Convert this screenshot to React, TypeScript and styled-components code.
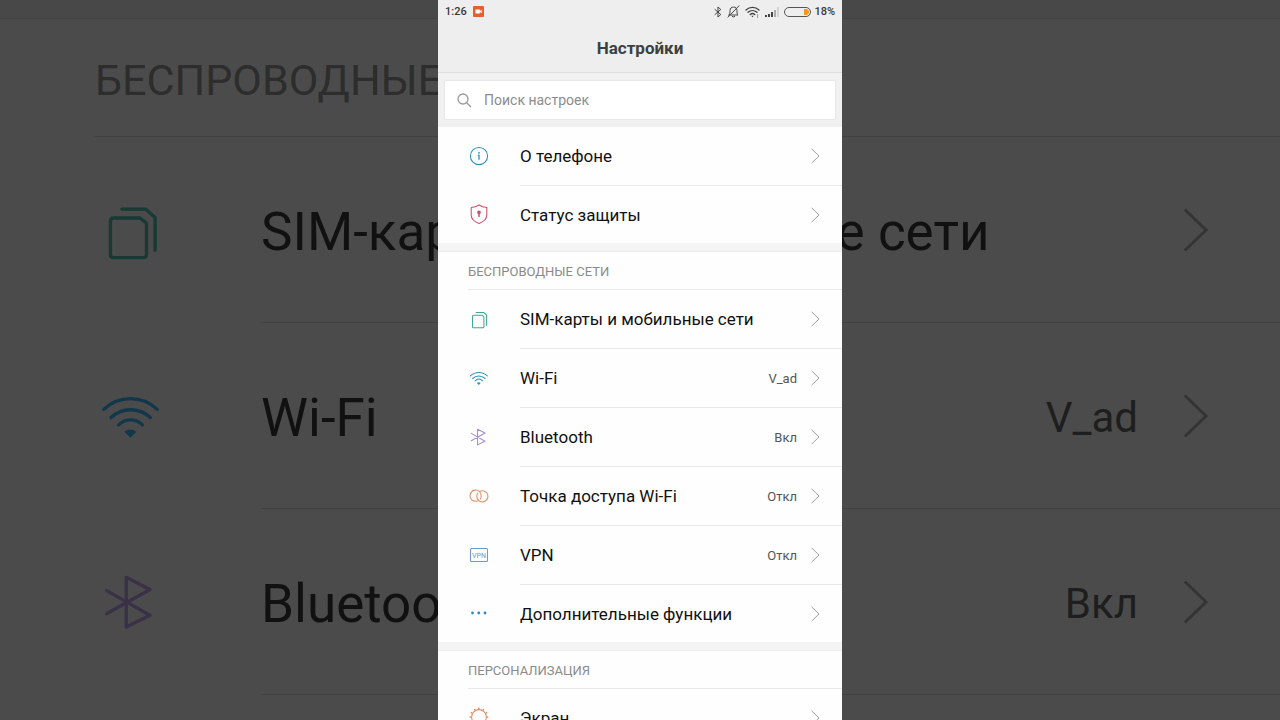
import React from "react";
import styled, { createGlobalStyle, ThemeProvider } from "styled-components";

const GlobalStyle = createGlobalStyle`
  *, *::before, *::after { box-sizing: border-box; }
  body { margin: 0; background: #4b4b4b; }
  button, input { font: inherit; }
`;

const screenTheme = {
  surface: "#fefefe",
  band: "#f4f4f4",
  bandEdge: "#ececec",
  bandSize: 9,
  line: "#e9e9e9",
  title: "#111111",
  value: "#555555",
  muted: "#8a8a8a",
  chevron: "#a0a0a0",
  headerHeight: 38,
  headerIndent: 30,
  headerDrop: 1,
  headerFont: 13,
  rowHeight: 59,
  lastRowHeight: 57,
  bodyIndent: 82,
  iconIndent: 29,
  iconSize: 24,
  iconLift: 2,
  titleDrop: 0,
  titleFont: 17,
  valueFont: 13,
  chevronWidth: 9,
  chevronHeight: 16,
  chevronGap: 14,
  endPadding: 22,
  blue: "#2b8fbb",
  green: "#3fa892",
  purple: "#a58bd6",
  orange: "#dd8f68",
  red: "#cf4d6b",
  steel: "#6a9ac6",
};

type Palette = typeof screenTheme;

const backdropTheme: Palette = {
  ...screenTheme,
  surface: "#4b4b4b",
  band: "#484848",
  bandEdge: "#434343",
  bandSize: 19,
  line: "#414141",
  title: "#111111",
  value: "#1e1e1e",
  muted: "#2d2d2d",
  chevron: "#343434",
  headerHeight: 118,
  headerIndent: 95,
  headerDrop: 4,
  headerFont: 43,
  rowHeight: 186,
  lastRowHeight: 186,
  bodyIndent: 261,
  iconIndent: 93,
  iconSize: 76,
  iconLift: 0,
  titleDrop: 4,
  titleFont: 53,
  valueFont: 42,
  chevronWidth: 26,
  chevronHeight: 46,
  chevronGap: 45,
  endPadding: 71,
  blue: "#11384a",
  green: "#173a34",
  purple: "#3a3048",
};

const Stage = styled.div`
  display: grid;
  grid-template: minmax(0, 1fr) / minmax(0, 1fr);
  height: 100vh;
  overflow: hidden;
  font-family: Roboto, "Liberation Sans", sans-serif;
`;

const Backdrop = styled.div`
  grid-area: 1 / 1;
  overflow: hidden;
  background: #4b4b4b;
`;

const Screen = styled.main`
  grid-area: 1 / 1;
  justify-self: center;
  position: relative;
  width: 100%;
  max-width: 404px;
  overflow: hidden;
  background: #fefefe;
`;

const StatusBar = styled.div`
  display: flex;
  align-items: center;
  justify-content: space-between;
  height: 23px;
  padding: 0 7px;
  background: #eeeeee;
  color: #3a3a3a;
  font-size: 11px;
  font-weight: 500;
  line-height: 23px;
`;

const StatusGroup = styled.div`
  display: flex;
  align-items: center;
  gap: 6px;
`;

const StatusIconGroup = styled(StatusGroup)`
  gap: 5px;
`;

const Battery = styled.span`
  display: flex;
  justify-content: flex-end;
  width: 27px;
  height: 10px;
  padding: 1px;
  border: 1px solid #555555;
  border-radius: 5px;
`;

const Charge = styled.span`
  width: 5px;
  border-radius: 0 3px 3px 0;
  background: #f59a1c;
`;

const BatteryGroup = styled(StatusGroup)`
  gap: 3px;
`;

const TitleBar = styled.header`
  display: flex;
  align-items: center;
  justify-content: center;
  height: 50px;
  border-bottom: 1px solid #dfdfdf;
  background: #eeeeee;
`;

const Title = styled.h1`
  margin: 0;
  color: #3f3f3f;
  font-size: 17px;
  font-weight: 700;
  line-height: 24px;
`;

const SearchArea = styled.form`
  padding: 7px 6px;
  background: #f1f1f1;
`;

const SearchBox = styled.label`
  display: flex;
  align-items: center;
  gap: 12px;
  height: 40px;
  padding: 0 12px;
  border: 1px solid #e8e8e8;
  border-radius: 2px;
  background: #ffffff;
`;

const SearchInput = styled.input`
  flex: 1;
  min-width: 0;
  padding: 0;
  border: 0;
  outline: 0;
  background: none;
  color: #333333;
  font-size: 14px;
  line-height: 20px;
  &::placeholder { color: #8c8c8c; opacity: 1; }
`;

const Band = styled.div`
  height: ${(p: any) => p.theme.bandSize}px;
  border-bottom: 1px solid ${(p: any) => p.theme.bandEdge};
  background: ${(p: any) => p.theme.band};
`;

const SectionTitle = styled.h2`
  display: flex;
  align-items: center;
  height: ${(p: any) => p.theme.headerHeight}px;
  margin: 0 0 0 ${(p: any) => p.theme.headerIndent}px;
  padding-top: ${(p: any) => p.theme.headerDrop}px;
  border-bottom: 1px solid ${(p: any) => p.theme.line};
  color: ${(p: any) => p.theme.muted};
  font-size: ${(p: any) => p.theme.headerFont}px;
  font-weight: 400;
  white-space: nowrap;
`;

const List = styled.ul`
  margin: 0;
  padding: 0;
  list-style: none;
  background: ${(p: any) => p.theme.surface};
`;

const RowButton = styled.button`
  display: flex;
  align-items: stretch;
  width: 100%;
  height: ${(p: any) => p.theme.rowHeight}px;
  padding: 0;
  border: 0;
  background: none;
  text-align: left;
  cursor: pointer;
  li:last-child > & { height: ${(p: any) => p.theme.lastRowHeight}px; }
`;

const IconCell = styled.span`
  display: flex;
  flex: none;
  align-items: center;
  width: ${(p: any) => p.theme.bodyIndent}px;
  padding-bottom: ${(p: any) => p.theme.iconLift}px;
  padding-left: ${(p: any) => p.theme.iconIndent}px;
`;

const RowBody = styled.span`
  display: flex;
  flex: 1;
  align-items: center;
  min-width: 0;
  padding-right: ${(p: any) => p.theme.endPadding}px;
  border-bottom: 1px solid ${(p: any) => p.theme.line};
  li:last-child & { border-bottom: 0; }
`;

const RowTitle = styled.span`
  flex: 1;
  padding-top: ${(p: any) => p.theme.titleDrop}px;
  color: ${(p: any) => p.theme.title};
  font-size: ${(p: any) => p.theme.titleFont}px;
  white-space: nowrap;
`;

const RowValue = styled.span`
  margin-right: ${(p: any) => p.theme.chevronGap}px;
  padding-top: ${(p: any) => p.theme.titleDrop}px;
  color: ${(p: any) => p.theme.value};
  font-size: ${(p: any) => p.theme.valueFont}px;
  white-space: nowrap;
`;

const Glyph = styled.svg<{ $tone: string }>`
  display: block;
  width: ${(p: any) => p.theme.iconSize}px;
  height: ${(p: any) => p.theme.iconSize}px;
  color: ${(p: any) => p.theme[p.$tone]};
  fill: none;
  stroke: currentColor;
  stroke-width: 1.05;
  stroke-linecap: round;
  stroke-linejoin: round;
`;

const ChevronSvg = styled.svg`
  flex: none;
  width: ${(p: any) => p.theme.chevronWidth}px;
  height: ${(p: any) => p.theme.chevronHeight}px;
  fill: none;
  stroke: ${(p: any) => p.theme.chevron};
  stroke-width: 1;
`;

const StatusIcon = styled.svg`
  display: block;
  flex: none;
  fill: none;
  stroke: #444444;
  stroke-linecap: round;
  stroke-linejoin: round;
`;

const bumps = Array.from({ length: 12 }, (_, i) => {
  const a = (i * Math.PI) / 6;
  return [12 + 8.6 * Math.cos(a), 12 + 8.6 * Math.sin(a)];
});

const glyphs: Record<string, { tone: string; art: React.ReactNode }> = {
  info: {
    tone: "blue",
    art: (
      <>
        <circle cx="12" cy="12" r="8.6" />
        <circle cx="12" cy="8.8" r="0.9" fill="currentColor" stroke="none" />
        <path d="M11.4 11.2H12V15.2" strokeWidth="1.3" />
      </>
    ),
  },
  shield: {
    tone: "red",
    art: (
      <>
        <path d="M12 3C9.6 4.6 7 5.4 4.2 5.6V13C4.2 17 7.6 19.8 12 21.4C16.4 19.8 19.8 17 19.8 13V5.6C17 5.4 14.4 4.6 12 3Z" />
        <circle cx="12" cy="10.4" r="1.8" fill="currentColor" stroke="none" />
        <path d="M12 11V14.4" strokeWidth="1.5" />
      </>
    ),
  },
  sim: {
    tone: "green",
    art: (
      <>
        <path d="M6.5 8.2H14.9L16.9 9.9V19.7Q16.9 20.7 15.9 20.7H6.5Q5.5 20.7 5.5 19.7V9.2Q5.5 8.2 6.5 8.2Z" />
        <path d="M9.1 5.4H16.6L19.6 8.05V18.4" />
      </>
    ),
  },
  wifi: {
    tone: "blue",
    art: (
      <>
        <path d="M3.4 9.9C8.2 5.4 15.5 5.4 20.3 9.9M5.7 12.5C9.3 9.2 14.4 9.2 18.1 12.5M8.1 14.8C10.3 12.7 13.4 12.7 15.6 14.8" />
        <path d="M9.9 17Q11.8 15.500 13.700 17L11.800 18.900Z" fill="currentColor" stroke="none" />
      </>
    ),
  },
  bluetooth: {
    tone: "purple",
    art: <path d="M4.3 8.4L18 16.2L10.5 19.9V4.2L18 8.05L4.3 15.7" />,
  },
  hotspot: {
    tone: "orange",
    art: (
      <>
        <path d="M11.1 16.7A5.6 5.6 0 1 1 14.2 12A5.6 5.6 0 0 1 13.3 15" />
        <path d="M12.9 7.3A5.6 5.6 0 1 1 9.8 12A5.6 5.6 0 0 1 10.7 9" />
      </>
    ),
  },
  vpn: {
    tone: "steel",
    art: (
      <>
        <rect x="3.5" y="5.5" width="17" height="13" rx="1" />
        <text x="12" y="14.500" textAnchor="middle" fontSize="7" fill="currentColor" stroke="none">
          VPN
        </text>
      </>
    ),
  },
  more: {
    tone: "blue",
    art: (
      <g fill="currentColor" stroke="none">
        <circle cx="5.5" cy="12" r="1.4" />
        <circle cx="11.8" cy="12" r="1.4" />
        <circle cx="18" cy="12" r="1.4" />
      </g>
    ),
  },
  display: {
    tone: "orange",
    art: (
      <>
        <circle cx="12" cy="12" r="7.4" />
        {bumps.map(([x, y], i) => (
          <circle key={i} cx={x} cy={y} r="0.85" fill="currentColor" stroke="none" />
        ))}
      </>
    ),
  },
};

type Item = { icon: string; title: string; value?: string };

const about: Item[] = [
  { icon: "info", title: "О телефоне" },
  { icon: "shield", title: "Статус защиты" },
];

const wireless: Item[] = [
  { icon: "sim", title: "SIM-карты и мобильные сети" },
  { icon: "wifi", title: "Wi-Fi", value: "V_ad" },
  { icon: "bluetooth", title: "Bluetooth", value: "Вкл" },
  { icon: "hotspot", title: "Точка доступа Wi-Fi", value: "Откл" },
  { icon: "vpn", title: "VPN", value: "Откл" },
  { icon: "more", title: "Дополнительные функции" },
];

const personal: Item[] = [{ icon: "display", title: "Экран" }];

function SettingsList({ items, inert }: { items: Item[]; inert?: boolean }) {
  return (
    <List>
      {items.map((item) => (
        <li key={item.title}>
          <RowButton type="button" tabIndex={inert ? -1 : undefined}>
            <IconCell>
              <Glyph viewBox="0 0 24 24" $tone={glyphs[item.icon].tone} aria-hidden="true">
                {glyphs[item.icon].art}
              </Glyph>
            </IconCell>
            <RowBody>
              <RowTitle>{item.title}</RowTitle>
              {item.value && <RowValue>{item.value}</RowValue>}
              <ChevronSvg viewBox="0 0 9 16" aria-hidden="true">
                <path d="M0.6 0.9L8 8L0.6 15.1" />
              </ChevronSvg>
            </RowBody>
          </RowButton>
        </li>
      ))}
    </List>
  );
}

function StatusIcons() {
  return (
    <>
      <StatusIcon width="8" height="12" viewBox="0 0 8 12" aria-label="Bluetooth">
        <path d="M1 3.5L6.8 8.5L4 11V1L6.8 3.5L1 8.5" />
      </StatusIcon>
      <StatusIcon width="13" height="13" viewBox="0 0 13 13" aria-label="Без звука">
        <path d="M2 10H11C9.9 9 10 7.5 10 5.5C10 3.4 8.5 2 6.5 2S3 3.4 3 5.5C3 7.5 3.1 9 2 10ZM5.3 11.6Q6.5 12.4 7.7 11.6M12 0.8L1 12.2" />
      </StatusIcon>
      <StatusIcon width="15" height="12" viewBox="0 0 15 12" aria-label="Wi-Fi">
        <path d="M1 4C4.7 0.6 10.3 0.6 14 4M3 6.3C5.6 4 9.4 4 12 6.3M5.2 8.5C6.6 7.3 8.4 7.3 9.8 8.5" strokeWidth="1.3" />
        <path d="M6.200 9.800H8.800L7.500 11.300Z" fill="#444444" stroke="none" />
        <path d="M12.500 8.500V11.500" stroke="#999999" />
      </StatusIcon>
      <StatusIcon width="14" height="10" viewBox="0 0 14 10" aria-label="Сигнал">
        <g stroke="none" fill="#444444">
          <rect x="0" y="8" width="2" height="2" />
          <rect x="3" y="7" width="2" height="3" />
          <rect x="6" y="5" width="2" height="5" />
          <rect x="9" y="3" width="2" height="7" fill="#aaaaaa" />
          <rect x="12" y="0" width="2" height="10" fill="#d4d4d4" />
        </g>
      </StatusIcon>
    </>
  );
}

export default function App() {
  return (
    <Stage>
      <GlobalStyle />
      <ThemeProvider theme={backdropTheme}>
        <Backdrop aria-hidden="true">
          <Band />
          <SectionTitle as="div">БЕСПРОВОДНЫЕ СЕТИ</SectionTitle>
          <SettingsList items={wireless.slice(0, 4)} inert />
        </Backdrop>
      </ThemeProvider>
      <ThemeProvider theme={screenTheme}>
        <Screen>
          <StatusBar>
            <StatusGroup>
              <span>1:26</span>
              <svg width="11" height="11" viewBox="0 0 11 11" aria-label="Запись экрана">
                <rect width="11" height="11" rx="1" fill="#e2622f" />
                <path d="M2.5 3.5H6.8V5L8.7 3.7V7.3L6.8 6V7.5H2.5Z" fill="#ffffff" />
              </svg>
            </StatusGroup>
            <StatusIconGroup>
              <StatusIcons />
              <BatteryGroup>
                <Battery>
                  <Charge />
                </Battery>
                <span>18%</span>
              </BatteryGroup>
            </StatusIconGroup>
          </StatusBar>
          <TitleBar>
            <Title>Настройки</Title>
          </TitleBar>
          <SearchArea>
            <SearchBox>
              <svg width="15" height="15" viewBox="0 0 15 15" fill="none" stroke="#9a9a9a" strokeWidth="1.3" aria-hidden="true">
                <circle cx="6" cy="6" r="5" />
                <path d="M9.7 9.7L14 14" />
              </svg>
              <SearchInput type="search" aria-label="Поиск настроек" placeholder="Поиск настроек" />
            </SearchBox>
          </SearchArea>
          <SettingsList items={about} />
          <Band />
          <SectionTitle>БЕСПРОВОДНЫЕ СЕТИ</SectionTitle>
          <SettingsList items={wireless} />
          <Band />
          <SectionTitle>ПЕРСОНАЛИЗАЦИЯ</SectionTitle>
          <SettingsList items={personal} />
        </Screen>
      </ThemeProvider>
    </Stage>
  );
}
